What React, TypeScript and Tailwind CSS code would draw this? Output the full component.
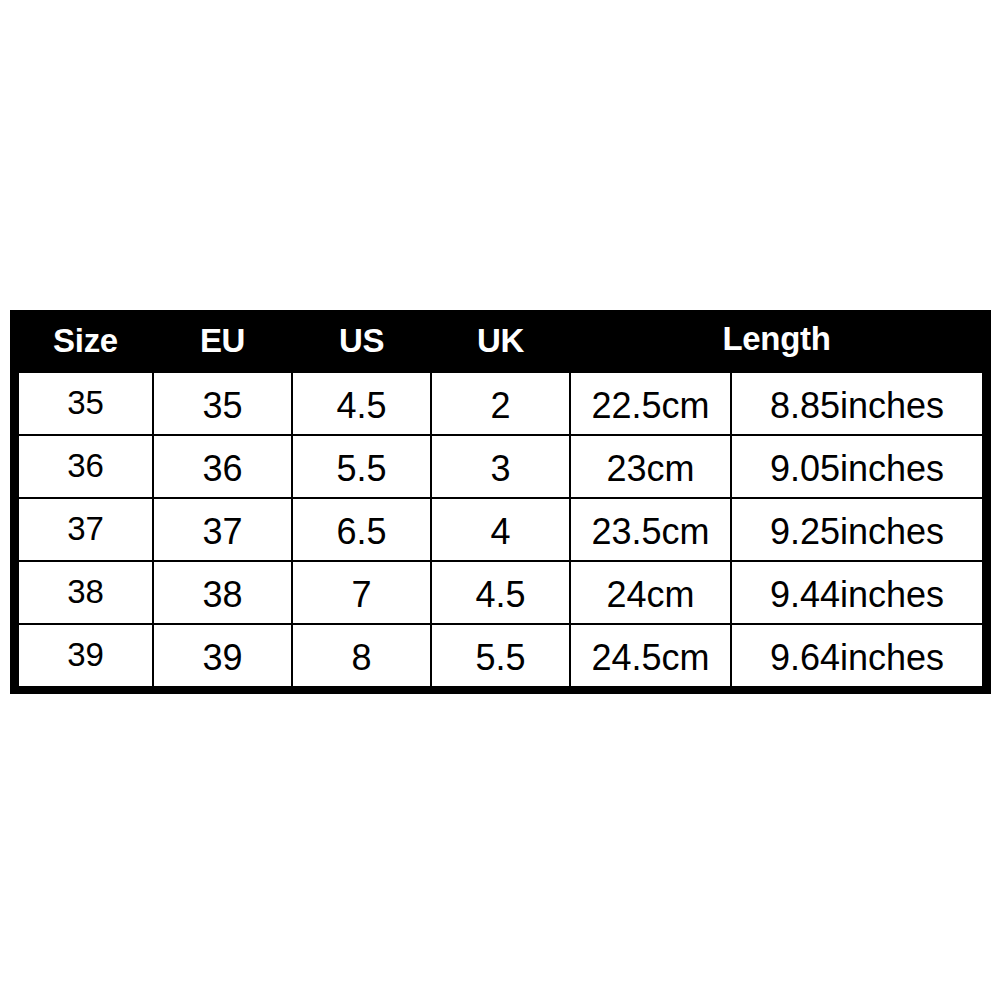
import React from "react";

const rows = [
  ["35", "35", "4.5", "2", "22.5cm", "8.85inches"],
  ["36", "36", "5.5", "3", "23cm", "9.05inches"],
  ["37", "37", "6.5", "4", "23.5cm", "9.25inches"],
  ["38", "38", "7", "4.5", "24cm", "9.44inches"],
  ["39", "39", "8", "5.5", "24.5cm", "9.64inches"],
];

export default function App() {
  return (
    <div
      className="w-[1001px] h-[1001px] bg-white overflow-hidden pt-[310px] pl-[10px]"
      style={{ fontFamily: '"Liberation Sans", Arial, sans-serif' }}
    >
      <div className="w-fit bg-black border-black border-l-[9px] border-r-[9px] border-b-[8px]">
        <div className="grid grid-cols-[133px_137px_137px_137px_159px_250px] auto-rows-[61px] gap-[2px] bg-black">
          {["Size", "EU", "US", "UK"].map((h) => (
            <div
              key={h}
              className="h-[60px] flex items-center justify-center bg-black text-white font-bold text-[33px] leading-none tracking-[-0.3px]"
            >
              {h}
            </div>
          ))}
          <div className="col-span-2 h-[60px] flex items-center justify-center bg-black text-white font-bold text-[33px] leading-none tracking-[-0.3px] pb-[4px]">
            Length
          </div>
          {rows.map((r, i) =>
            r.map((c, j) => (
              <div
                key={`${i}-${j}`}
                className="bg-white flex items-center justify-center text-black text-[36px] leading-none"
              >
                <span className={j === 0 ? "text-[33px] -mt-[2px]" : "mt-[4px]"}>{c}</span>
              </div>
            ))
          )}
        </div>
      </div>
    </div>
  );
}
